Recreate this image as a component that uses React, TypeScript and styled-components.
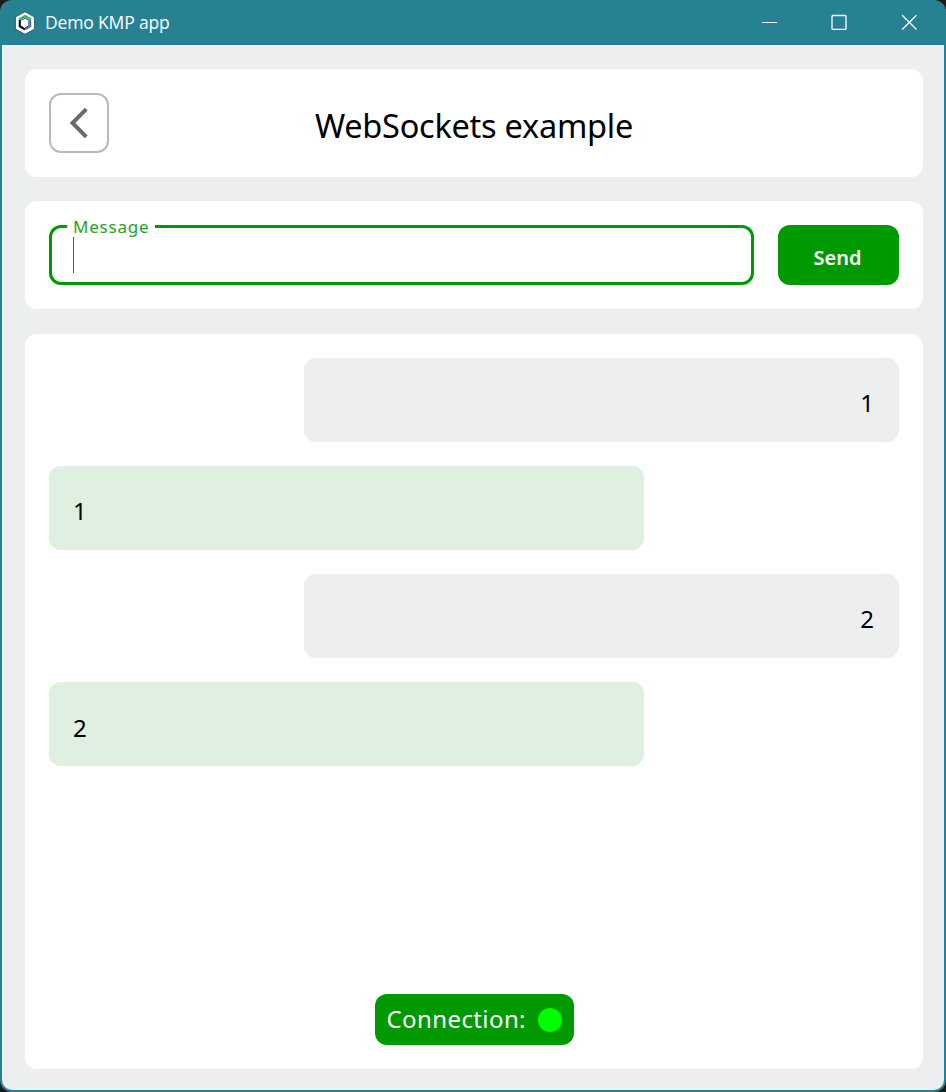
import React from "react";
import styled, { createGlobalStyle } from "styled-components";

const green = "#009900";
const teal = "#268293";
const surface = "#edeef0";

const GlobalStyle = createGlobalStyle`
  * { box-sizing: border-box; }
  html, body { margin: 0; background: #1c1c1c; }
  body { font-family: "Noto Sans", "Open Sans", sans-serif; color: #000; }
  button { font: inherit; padding: 0; cursor: pointer; }
`;

const Window = styled.div`
  display: flex;
  flex-direction: column;
  width: 946px;
  height: 1092px;
  padding: 0 2px 2px;
  border-radius: 12px;
  background: ${teal};
  overflow: hidden;
`;

const TitleBar = styled.header`
  display: flex;
  align-items: center;
  flex: 0 0 45px;
  padding-left: 12px;
  color: #fff;
`;

const WindowTitle = styled.span`
  flex: 1;
  margin: 0 0 2px 9px;
  font-family: "Open Sans", sans-serif;
  font-size: 17.5px;
  line-height: 24px;
  letter-spacing: -0.15px;
`;

const WindowControls = styled.div`
  display: flex;
  height: 45px;
`;

const ControlButton = styled.button`
  display: grid;
  place-items: center;
  width: 70px;
  height: 44px;
  border: 0;
  background: none;
  color: #fff;
`;

const Content = styled.main`
  display: flex;
  flex: 1;
  flex-direction: column;
  gap: 24.3px;
  padding: 24px 21px 21px 23px;
  border-radius: 0 0 10px 10px;
  background: ${surface};
`;

const Card = styled.section<{ $grow?: boolean }>`
  display: flex;
  align-items: center;
  flex: ${(p) => (p.$grow ? "1" : "0 0 108px")};
  flex-direction: ${(p) => (p.$grow ? "column" : "row")};
  padding: 24px;
  border-radius: 12px;
  background: #fff;
`;

const BackButton = styled.button`
  display: grid;
  place-items: center;
  width: 60px;
  height: 60px;
  border: 2px solid #b9b9b9;
  border-radius: 12px;
  background: #fff;
`;

const Heading = styled.h1`
  flex: 1;
  margin: 6px 60px 0 0;
  font-size: 32.5px;
  font-weight: 400;
  line-height: 44px;
  letter-spacing: -0.25px;
  text-align: center;
`;

const Field = styled.fieldset`
  flex: 1;
  height: 69px;
  min-width: 0;
  margin: -9px 24px 0 0;
  padding: 0 21px;
  border: 3px solid ${green};
  border-radius: 12px;
`;

const FieldLabel = styled.legend`
  width: 88px;
  height: 21px;
  margin-left: -6px;
  padding: 0 0 0 6px;
  color: #1fa31f;
  font-size: 17px;
  line-height: 21px;
  letter-spacing: 0.8px;
  white-space: nowrap;
`;

const Caret = styled.div`
  width: 1px;
  height: 36px;
  background: ${green};
`;

const SendButton = styled.button`
  width: 121px;
  height: 60px;
  padding: 5px 2px 0 0;
  border: 0;
  border-radius: 12px;
  background: ${green};
  color: #fff;
  && { font-size: 20px; font-weight: 600; }
`;

const Messages = styled.div`
  display: flex;
  flex: 1;
  flex-direction: column;
  gap: 24.2px;
  align-self: stretch;
`;

const Bubble = styled.div<{ $own?: boolean }>`
  display: flex;
  align-items: center;
  align-self: ${(p) => (p.$own ? "flex-end" : "flex-start")};
  justify-content: ${(p) => (p.$own ? "flex-end" : "flex-start")};
  width: 595px;
  height: 84px;
  padding: 7px 25px 0 24px;
  border-radius: 12px;
  background: ${(p) => (p.$own ? surface : "#dfefe0")};
  font-size: 24px;
  line-height: 36px;
`;

const Status = styled.div`
  display: flex;
  align-items: center;
  justify-content: space-between;
  width: 199px;
  height: 51px;
  padding: 0 12px;
  border-radius: 12px;
  background: ${green};
  color: #fff;
  font-size: 24px;
  letter-spacing: 0.4px;
  white-space: nowrap;
`;

const StatusLabel = styled.span`
  margin-bottom: 2px;
`;

const StatusDot = styled.span`
  width: 24px;
  height: 24px;
  margin-top: 1px;
  border-radius: 50%;
  background: #00ff00;
`;

const messages = [
  { text: "1", own: true },
  { text: "1", own: false },
  { text: "2", own: true },
  { text: "2", own: false },
];

const Logo = () => (
  <svg width="22" height="24" viewBox="0 0 22 24">
    <path d="M11 .7 20.6 6v12L11 23.3 1.4 18V6z" fill="#fff" stroke="#1a4a58" strokeWidth=".8" />
    <path d="M5.8 8.4v6.9L11 18.4" fill="none" stroke="#0c161e" strokeWidth="2.2" />
    <path d="m11 18.4 5.3-3.1V8.4" fill="none" stroke="#3f6fba" strokeWidth="1.8" />
    <path d="M5 8.4 11 5l6 3.4" fill="none" stroke="#35b56a" strokeWidth="2.2" />
    <path d="M7.2 9.2 11 7l3.9 2.2v5.4L11 17" fill="none" stroke="#182c3c" strokeWidth=".9" />
  </svg>
);

export default function App() {
  return (
    <>
      <GlobalStyle />
      <Window>
        <TitleBar>
          <Logo />
          <WindowTitle>Demo KMP app</WindowTitle>
          <WindowControls>
            <ControlButton aria-label="Minimize">
              <svg width="16" height="16" viewBox="0 0 16 16">
                <path d="M1 8.5h15" stroke="currentColor" />
              </svg>
            </ControlButton>
            <ControlButton aria-label="Maximize">
              <svg width="16" height="16" viewBox="0 0 16 16">
                <rect x="1" y="1.5" width="14" height="14" rx="1" fill="none" stroke="currentColor" strokeWidth="1.3" />
              </svg>
            </ControlButton>
            <ControlButton aria-label="Close">
              <svg width="16" height="16" viewBox="0 0 16 16">
                <path d="m1.2 1.2 14.3 14.3m0-14.3L1.2 15.5" stroke="currentColor" strokeWidth="1.3" />
              </svg>
            </ControlButton>
          </WindowControls>
        </TitleBar>
        <Content>
          <Card>
            <BackButton aria-label="Back">
              <svg width="20" height="32" viewBox="0 0 20 32">
                <path d="M17.3 2.2 3.5 16l13.8 13.8" fill="none" stroke="#6b6b6b" strokeWidth="4" />
              </svg>
            </BackButton>
            <Heading>WebSockets example</Heading>
          </Card>
          <Card>
            <Field>
              <FieldLabel>Message</FieldLabel>
              <Caret />
            </Field>
            <SendButton>Send</SendButton>
          </Card>
          <Card $grow>
            <Messages>
              {messages.map((m, i) => (
                <Bubble key={i} $own={m.own}>{m.text}</Bubble>
              ))}
            </Messages>
            <Status>
              <StatusLabel>Connection:</StatusLabel>
              <StatusDot />
            </Status>
          </Card>
        </Content>
      </Window>
    </>
  );
}
